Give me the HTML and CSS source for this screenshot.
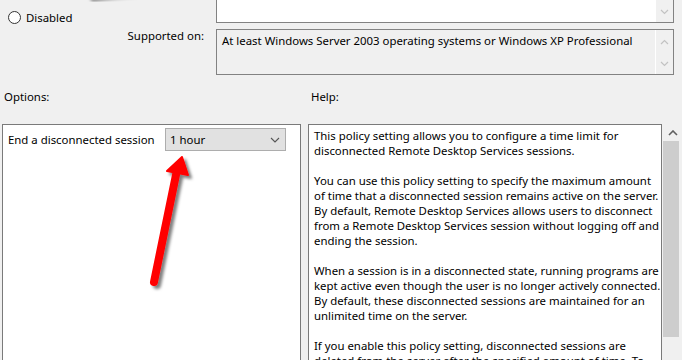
FILE: index.html
```html
<!DOCTYPE html>
<html lang="en">
<head>
  <meta charset="utf-8">
  <link rel="stylesheet" href="styles.css">
</head>
<body>

<div class="page">

  <div class="head">
    <div class="radio-cell"><span class="radio"></span>Disabled</div>
    <div class="box comment">
      <div class="box-body"></div>
      <div class="vscroll">
        <svg class="chev" width="9" height="6" viewBox="0 0 9 6"><polyline points="1,1 4.5,4.5 8,1"/></svg>
      </div>
    </div>

    <div class="label-right">Supported on:</div>
    <div class="box supported">
      <div class="box-body">At least Windows Server 2003 operating systems or Windows XP Professional</div>
      <div class="vscroll split">
        <svg class="chev" width="9" height="6" viewBox="0 0 9 6"><polyline points="1,5 4.5,1.5 8,5"/></svg>
        <svg class="chev" width="9" height="6" viewBox="0 0 9 6"><polyline points="1,1 4.5,4.5 8,1"/></svg>
      </div>
    </div>
  </div>

  <div class="section-labels">
    <div class="opt-title">Options:</div>
    <div class="help-title">Help:</div>
  </div>

  <div class="panels">
    <div class="options-panel">
      <div class="option-row">
        <span class="option-label">End a disconnected session</span>
        <div class="select">
          <span>1 hour</span>
          <svg class="select-chev" width="10" height="6" viewBox="0 0 10 6"><polyline points="1,1 5,5 9,1"/></svg>
        </div>
      </div>
    </div>

    <div class="help-panel">
      <p>This policy setting allows you to configure a time limit for<br>disconnected Remote Desktop Services sessions.</p>
      <p>You can use this policy setting to specify the maximum amount<br>of time that a disconnected session remains active on the server.<br>By default, Remote Desktop Services allows users to disconnect<br>from a Remote Desktop Services session without logging off and<br>ending the session.</p>
      <p>When a session is in a disconnected state, running programs are<br>kept active even though the user is no longer actively connected.<br>By default, these disconnected sessions are maintained for an<br>unlimited time on the server.</p>
      <p>If you enable this policy setting, disconnected sessions are<br>deleted from the server after the specified amount of time. To</p>
    </div>

    <div class="help-scroll">
      <svg class="up-chev" width="10" height="6" viewBox="0 0 10 6"><polyline points="1,5 5,1 9,5"/></svg>
      <div class="thumb"></div>
    </div>
  </div>

  <!-- red annotation arrows drawn over the screenshot -->
  <svg class="marks" width="682" height="360" viewBox="0 0 682 360">
    <defs>
      <filter id="shade" x="-50%" y="-50%" width="200%" height="200%">
        <feDropShadow dx="3" dy="3" stdDeviation="1.6" flood-color="#000" flood-opacity="0.5"/>
      </filter>
    </defs>
    <g filter="url(#shade)">
      <line x1="91" y1="-6" x2="260" y2="-22" stroke="#ff0000" stroke-width="8" stroke-linecap="round"/>
    </g>
    <g filter="url(#shade)">
      <line x1="154" y1="282" x2="177" y2="170" stroke="#ff0000" stroke-width="8" stroke-linecap="round"/>
      <polygon points="182,157 167,171 188,175" fill="#ff0000" stroke="#ff0000" stroke-width="2" stroke-linejoin="round"/>
    </g>
  </svg>

</div>

</body>
</html>
```

FILE: styles.css
```css
body {
  margin: 0;
  background-color: #f0f0f0;
  font-family: "Noto Sans", "Liberation Sans", sans-serif;
  font-size: 11.4px;
  color: #000;
  }

.page {
  position: relative;
  width: 682px;
  height: 360px;
  overflow: hidden;
  }

/* ---------- top part: radio + supported on ---------- */

.head {
  display: grid;
  grid-template-columns: 216px 458px;
  grid-template-rows: 23px 46px;
  row-gap: 6px;
  }

.radio-cell {
  display: flex;
  align-items: center;
  padding: 10px 0 0 8px;
  line-height: 15px;
  height: 15px;
  }

.radio {
  width: 11px;
  height: 11px;
  border: 1px solid #333;
  border-radius: 50%;
  background-color: #fff;
  margin-right: 5px;
  }

.label-right {
  text-align: right;
  padding-right: 12px;
  margin-top: -1px;
  line-height: 15px;
  }

.box {
  display: flex;
  border: 1px solid #828282;
  }

.box-body {
  flex: 1;
  padding: 3px 5px;
  line-height: 15px;
  }

.comment {
  border-top: none;
  background-color: #fff;
  }

.supported {
  background-color: #f0f0f0;
  }

.vscroll {
  width: 17px;
  background-color: #f0f0f0;
  display: flex;
  flex-direction: column;
  justify-content: flex-end;
  align-items: center;
  padding-bottom: 7px;
  }

.supported .vscroll {
  border-left: 1px solid #fff;
  justify-content: space-between;
  padding: 9px 0 7px 0;
  }

.chev polyline {
  fill: none;
  stroke: #c2c2c2;
  stroke-width: 1.2;
  }

/* ---------- section titles ---------- */

.section-labels {
  display: grid;
  grid-template-columns: 305px auto;
  padding-left: 2px;
  margin-top: 14px;
  line-height: 15px;
  }

.opt-title {
  padding-left: 2px;
  }

.help-title {
  padding-left: 4px;
  }

/* ---------- panels ---------- */

.panels {
  display: flex;
  padding-left: 2px;
  margin-top: 20px;
  height: 260px;
  }

.options-panel {
  width: 296px;
  border: 1px solid #7a7a7a;
  background-color: #fff;
  padding: 3px 5px;
  margin-right: 7px;
  }

.option-row {
  display: flex;
  align-items: center;
  }

.option-label {
  width: 157px;
  line-height: 15px;
  }

.select {
  width: 115px;
  height: 21px;
  border: 1px solid #adadad;
  background-color: #e1e1e1;
  padding-left: 4px;
  display: flex;
  align-items: center;
  justify-content: space-between;
  }

.select-chev {
  margin-right: 5px;
  }

.select-chev polyline {
  fill: none;
  stroke: #555;
  stroke-width: 1.1;
  }

.help-panel {
  width: 342px;
  border: 1px solid #7a7a7a;
  background-color: #fff;
  padding: 3px 5px;
  line-height: 15px;
  white-space: nowrap;
  }

.help-panel p {
  margin: 0 0 15px 0;
  }

.help-scroll {
  width: 20px;
  display: flex;
  flex-direction: column;
  align-items: center;
  padding-left: 1px;
  box-sizing: border-box;
  }

.up-chev {
  margin: 6px 0 5px 0;
  }

.up-chev polyline {
  fill: none;
  stroke: #606060;
  stroke-width: 1.6;
  }

.thumb {
  width: 16px;
  height: 196px;
  background-color: #cdcdcd;
  margin-right: 3px;
  }

.marks {
  position: absolute;
  top: 0;
  left: 0;
  overflow: visible;
  pointer-events: none;
  }
```
